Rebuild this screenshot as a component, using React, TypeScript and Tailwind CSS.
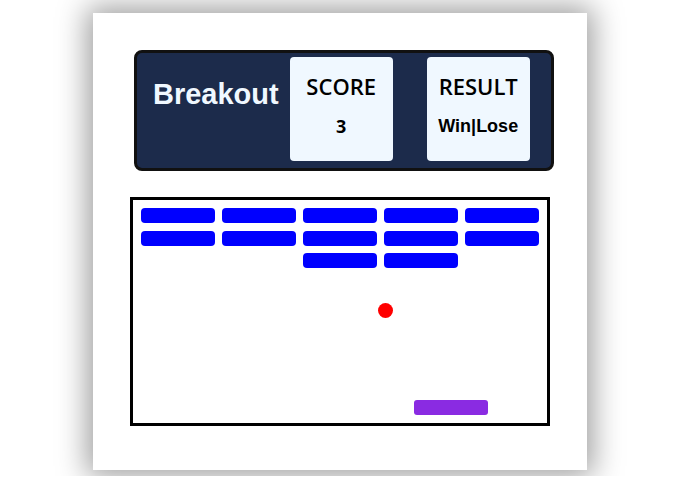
const bricks = [
  { row: 0, col: 0 }, { row: 0, col: 1 }, { row: 0, col: 2 }, { row: 0, col: 3 }, { row: 0, col: 4 },
  { row: 1, col: 0 }, { row: 1, col: 1 }, { row: 1, col: 2 }, { row: 1, col: 3 }, { row: 1, col: 4 },
  { row: 2, col: 2 }, { row: 2, col: 3 },
]

const StatBox = ({ title, value, valueClass }: { title: string; value: string; valueClass: string }) => (
  <div className="flex h-[104px] w-[103px] flex-col items-center rounded bg-[#f0f8ff] pt-[14px] text-black">
    <h2 className="font-['Open_Sans',sans-serif] text-[22px] leading-[30px] font-semibold">{title}</h2>
    <p className={valueClass}>{value}</p>
  </div>
)

export default function App() {
  return (
    <div className="h-[476px] overflow-hidden bg-white">
      <div className="mx-auto mt-[13px] h-[457px] w-[494px] bg-white pt-[37px] shadow-[0_0_28px_6px_rgba(0,0,0,0.38)]">
        <div className="ml-[41px] flex h-[121px] w-[420px] items-start rounded-lg border-[3px] border-[#111] bg-[#1c2b4b] pt-[4px] pl-[16px]">
          <h1 className="mt-[17px] font-['Liberation_Sans',Arial,sans-serif] text-[29px] leading-[40px] font-bold text-[#f0f8ff]">
            Breakout
          </h1>
          <div className="ml-[11px]">
            <StatBox
              title="SCORE"
              value="3"
              valueClass="mt-[14px] font-['Open_Sans',sans-serif] text-[18px] leading-[22px] font-bold"
            />
          </div>
          <div className="ml-[34px]">
            <StatBox
              title="RESULT"
              value="Win|Lose"
              valueClass="mt-[14px] font-['Liberation_Sans',Arial,sans-serif] text-[18px] leading-[22px] font-bold"
            />
          </div>
        </div>

        <div className="relative mt-[26px] ml-[37px] h-[229px] w-[420px] border-[3px] border-black bg-white">
          {bricks.map((b) => (
            <div
              key={`${b.row}-${b.col}`}
              className="absolute h-[15px] w-[74px] rounded bg-[#0000ff]"
              style={{ left: 8 + b.col * 81, top: 8 + b.row * 22.5 }}
            />
          ))}
          <div className="absolute top-[103px] left-[245px] h-[15px] w-[15px] rounded-full bg-[#ff0000]" />
          <div className="absolute top-[200px] left-[281px] h-[15px] w-[74px] rounded-[3px] bg-[#8a2be2]" />
        </div>
      </div>
    </div>
  )
}
